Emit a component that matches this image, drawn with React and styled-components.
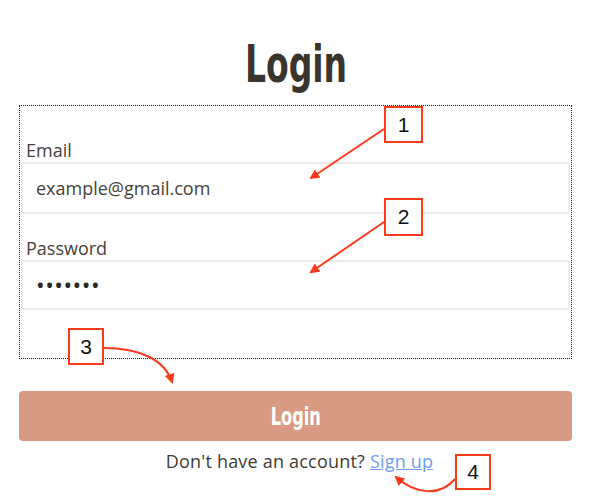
import React from 'react'
import styled, { createGlobalStyle } from 'styled-components'

const GlobalStyle = createGlobalStyle`
    html, body {
        margin: 0;
        padding: 0;
        background: #ffffff;
    }
    body {
        font-family: "Open Sans", "Noto Sans", sans-serif;
        color: #3a3731;
    }
`;

const annotations = [
    { n: 1, x: 384, y: 106, w: 39, h: 37 },
    { n: 2, x: 384, y: 198, w: 39, h: 38 },
    { n: 3, x: 68, y: 328, w: 36, h: 37 },
    { n: 4, x: 455, y: 454, w: 36, h: 36 },
];

function Arrows() {
    return (
        <ArrowLayer width="594" height="501" viewBox="0 0 594 501">
            <defs>
                <marker id="head" markerWidth="10" markerHeight="10" refX="8" refY="5" orient="auto" markerUnits="userSpaceOnUse">
                    <path d="M0 0 L10 5 L0 10 Z" fill="#fb3a1c" />
                </marker>
            </defs>
            <path d="M384 129 L311 178" stroke="#fb3a1c" strokeWidth="2" fill="none" markerEnd="url(#head)" />
            <path d="M384 222 L311 272" stroke="#fb3a1c" strokeWidth="2" fill="none" markerEnd="url(#head)" />
            <path d="M104 348 C 140 348, 165 360, 172 382" stroke="#fb3a1c" strokeWidth="2" fill="none" markerEnd="url(#head)" />
            <path d="M455 479 C 440 497, 415 494, 396 477" stroke="#fb3a1c" strokeWidth="2" fill="none" markerEnd="url(#head)" />
        </ArrowLayer>
    )
}

function App() {
    return (
        <PageStyled>
            <GlobalStyle />
            <Title><Narrow>Login</Narrow></Title>
            <Form onSubmit={(e) => e.preventDefault()}>
                <Label htmlFor="email">Email</Label>
                <Input id="email" type="email" defaultValue="example@gmail.com" />
                <Label htmlFor="password" $spaced>Password</Label>
                <Input id="password" type="password" defaultValue="1234567" />
            </Form>
            <Button type="button"><Narrow>Login</Narrow></Button>
            <Footer>
                Don't have an account? <a href="#signup">Sign up</a>
            </Footer>
            {annotations.map((a) => (
                <Badge key={a.n} style={{ left: a.x, top: a.y, width: a.w, height: a.h }}>
                    {a.n}
                </Badge>
            ))}
            <Arrows />
        </PageStyled>
    )
}

const PageStyled = styled.div`
    position: relative;
    width: 594px;
    height: 501px;
    box-sizing: border-box;
    padding: 0 22px 0 19px;
    overflow: hidden;
`;

const Narrow = styled.span`
    display: inline-block;
    transform: scaleX(0.72);
`;

const Title = styled.h1`
    margin: 0;
    padding-top: 37px;
    height: 105px;
    box-sizing: border-box;
    text-align: center;
    font-family: "Liberation Sans Narrow", "DejaVu Sans Condensed", "Roboto Condensed", sans-serif;
    font-stretch: condensed;
    font-weight: 700;
    font-size: 51px;
    line-height: 56px;
    color: #39352c;
`;

const Form = styled.form`
    display: flex;
    flex-direction: column;
    border: 1px dotted #222;
    padding: 32px 1px 47px 1px;
    height: 254px;
    box-sizing: border-box;
`;

const Label = styled.label`
    display: block;
    padding-left: 5px;
    margin-top: ${(p) => (p.$spaced ? '22px' : '0')};
    font-size: 18px;
    line-height: 24px;
    color: #45413a;
`;

const Input = styled.input`
    display: block;
    height: 52px;
    box-sizing: border-box;
    width: 100%;
    border: 2px solid #eeeae5;
    border-radius: 3px;
    padding: 0 13px;
    font-family: "Open Sans", sans-serif;
    font-size: 18px;
    color: #45413a;
    background: #fff;
    outline: none;

    &[type="password"] {
        height: 50px;
        font-size: 23px;
        letter-spacing: 0.5px;
        color: #2b2824;
    }
`;

const Button = styled.button`
    display: block;
    width: 100%;
    margin-top: 32px;
    height: 50px;
    border: none;
    border-radius: 4px;
    background: #d89a82;
    color: #fff;
    font-family: "Liberation Sans Narrow", "DejaVu Sans Condensed", "Roboto Condensed", sans-serif;
    font-stretch: condensed;
    font-weight: 700;
    font-size: 25px;
    cursor: pointer;
`;

const Footer = styled.p`
    margin: 8px 0 0;
    padding-left: 8px;
    text-align: center;
    font-size: 18px;
    line-height: 24px;
    letter-spacing: 0.2px;
    color: #3f3c36;

    a {
        color: #6f9cf2;
        text-decoration: underline;
    }
`;

const Badge = styled.div`
    position: absolute;
    box-sizing: border-box;
    border: 2px solid #fb3a1c;
    background: #fff;
    display: flex;
    align-items: center;
    justify-content: center;
    font-family: "Liberation Sans", Arial, sans-serif;
    font-size: 21px;
    color: #111;
    z-index: 2;
`;

const ArrowLayer = styled.svg`
    position: absolute;
    left: 0;
    top: 0;
    pointer-events: none;
    z-index: 1;
`;

export default App;
